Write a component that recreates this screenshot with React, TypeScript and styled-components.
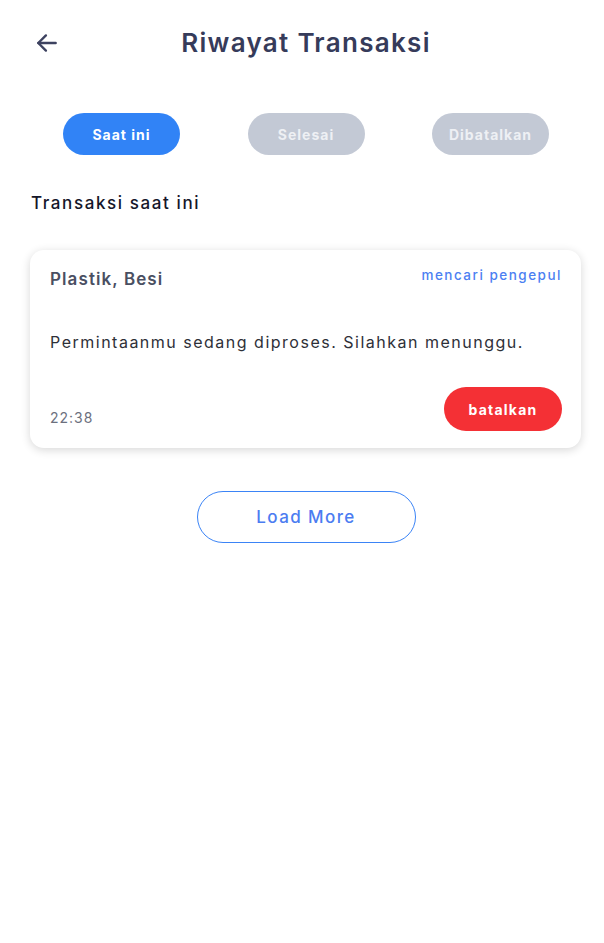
import React from "react";
import styled, { createGlobalStyle } from "styled-components";

const Global = createGlobalStyle`
  html, body { margin: 0; padding: 0; background: #ffffff; }
  body { font-family: "Inter", "Noto Sans", sans-serif; -webkit-font-smoothing: antialiased; }
  * { box-sizing: border-box; }
`;

const Page = styled.div`
  width: 604px;
  min-height: 943px;
  background: #fff;
  display: flex;
  flex-direction: column;
`;

const Header = styled.header`
  position: relative;
  height: 84px;
  display: flex;
  align-items: center;
  justify-content: center;
`;

const BackButton = styled.button`
  position: absolute;
  left: 31px;
  top: 27px;
  width: 32px;
  height: 32px;
  padding: 0;
  border: none;
  background: transparent;
  display: flex;
  align-items: center;
  justify-content: center;
  color: #3d4260;
  cursor: pointer;
`;

const Title = styled.h1`
  margin: 0 0 0 8px;
  font-size: 26px;
  font-weight: 600;
  color: #363b5a;
  letter-spacing: 1.3px;
`;

const Tabs = styled.nav`
  display: flex;
  justify-content: space-between;
  padding: 29px 55px 0 63px;
`;

const Tab = styled.button<{ $active?: boolean }>`
  width: 117px;
  height: 42px;
  border: none;
  border-radius: 21px;
  background: ${(p) => (p.$active ? "#3183f6" : "#c3c9d5")};
  color: ${(p) => (p.$active ? "#ffffff" : "#eef0f4")};
  font-family: inherit;
  font-size: 14px;
  font-weight: 700;
  letter-spacing: 1px;
`;

const SectionTitle = styled.h2`
  margin: 36px 0 0 31px;
  font-size: 17px;
  font-weight: 500;
  line-height: 24px;
  color: #15162a;
  letter-spacing: 1.6px;
`;

const Card = styled.article`
  margin: 35px 23px 0 30px;
  padding: 16px 19px 17px 20px;
  border-radius: 14px;
  background: #fff;
  box-shadow: 0 2px 10px rgba(0, 0, 0, 0.16);
  display: flex;
  flex-direction: column;
`;

const CardTop = styled.div`
  display: flex;
  justify-content: space-between;
  align-items: flex-start;
`;

const Materials = styled.div`
  font-size: 17px;
  font-weight: 600;
  line-height: 24px;
  color: #4a4f62;
  margin-top: 1px;
  letter-spacing: 1.1px;
`;

const Status = styled.div`
  font-size: 13.5px;
  font-weight: 500;
  line-height: 18px;
  color: #4c7ff2;
  letter-spacing: 1.5px;
`;

const Message = styled.p`
  margin: 39px 0 0;
  font-size: 16px;
  line-height: 24px;
  color: #2e3038;
  letter-spacing: 1.5px;
`;

const CardBottom = styled.div`
  margin-top: 33px;
  display: flex;
  justify-content: space-between;
  align-items: flex-end;
`;

const Time = styled.span`
  font-size: 14px;
  line-height: 20px;
  color: #6c707e;
  margin-bottom: 3px;
  letter-spacing: 1px;
`;

const CancelButton = styled.button`
  width: 118px;
  height: 44px;
  border: none;
  border-radius: 22px;
  background: #f43035;
  color: #fff;
  font-family: inherit;
  font-size: 14px;
  font-weight: 700;
  letter-spacing: 1.2px;
`;

const LoadMoreWrap = styled.div`
  display: flex;
  justify-content: center;
  margin-top: 43px;
`;

const LoadMore = styled.button`
  width: 219px;
  height: 52px;
  margin-left: 8px;
  border: 1.5px solid #3b84f6;
  border-radius: 26px;
  background: #fff;
  color: #4b7cf1;
  font-family: inherit;
  font-size: 17px;
  font-weight: 500;
  letter-spacing: 1.4px;
`;

export default function App() {
  return (
    <Page>
      <Global />
      <Header>
        <BackButton aria-label="Kembali">
          <svg width="26" height="26" viewBox="0 0 24 24" fill="none" stroke="currentColor" strokeWidth="2.2" strokeLinecap="round" strokeLinejoin="round">
            <path d="M20 12H4" />
            <path d="M11 5l-7 7 7 7" />
          </svg>
        </BackButton>
        <Title>Riwayat Transaksi</Title>
      </Header>
      <Tabs>
        <Tab $active>Saat ini</Tab>
        <Tab>Selesai</Tab>
        <Tab>Dibatalkan</Tab>
      </Tabs>
      <SectionTitle>Transaksi saat ini</SectionTitle>
      <Card>
        <CardTop>
          <Materials>Plastik, Besi</Materials>
          <Status>mencari pengepul</Status>
        </CardTop>
        <Message>Permintaanmu sedang diproses. Silahkan menunggu.</Message>
        <CardBottom>
          <Time>22:38</Time>
          <CancelButton>batalkan</CancelButton>
        </CardBottom>
      </Card>
      <LoadMoreWrap>
        <LoadMore>Load More</LoadMore>
      </LoadMoreWrap>
    </Page>
  );
}
